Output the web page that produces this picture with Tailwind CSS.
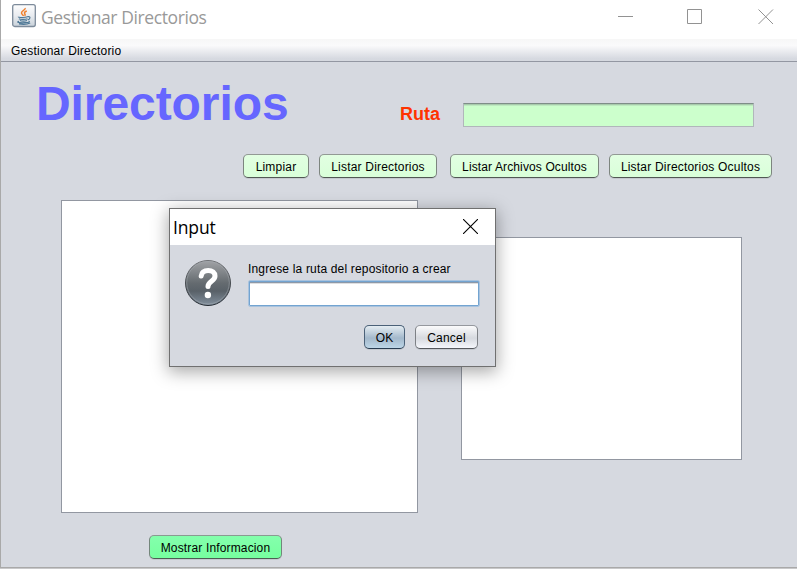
<!DOCTYPE html>
<html lang="es">
<head>
<meta charset="utf-8">
<title>Gestionar Directorios</title>
<script src="https://cdn.jsdelivr.net/npm/@tailwindcss/browser@4"></script>
</head>
<body class="w-[797px] h-[569px] overflow-hidden bg-[#c8c8ca] font-['Liberation_Sans',Arial,sans-serif] text-[12px] text-black">
<main class="relative flex flex-col w-[797px] h-[568px] border-l border-b border-[#a9a9a9] bg-[#d6d9e0]">
  <header class="flex h-[39px] shrink-0 bg-white pl-[11px]">
    <svg class="mt-[4px] shrink-0" width="25" height="24" viewBox="0 0 25 24" fill="none">
      <defs><linearGradient id="tile" x1="0" y1="0" x2="0" y2="1"><stop offset="0" stop-color="#fdfdfe"/><stop offset=".5" stop-color="#e9ecf0"/><stop offset="1" stop-color="#c9d2da"/></linearGradient></defs>
      <rect x=".7" y=".7" width="22.6" height="21.8" rx="2" fill="url(#tile)" stroke="#7d8b9b" stroke-width="1.3"/>
      <path d="M13.200 4c.5 2-4 2.700-3.700 5 .1 1.200 1.700 1.800 1.800 3M14.800 7c-1.700.6-2.900 1.500-2.100 2.700.5.700.9 1.200 0 2.200" stroke="#ee8130" stroke-width="1.500"/>
      <path d="M6.500 12.700c-1 .9 6.500 1.200 9 .1M7 14.700c1 .9 6.500.9 8.500.1M8 16.500c1.400.7 5 .7 7 0M15.500 12.700c3.200-.9 3.200 2.200.4 3.200M7 17.300c-4.200 1.200 3 2 9 1 1.200-.3 1.700-.7 1-1.100M7 19.900c3 .5 8.600.3 11.200-.9" stroke="#4e7896" stroke-width="1.200"/>
    </svg>
    <h2 class="ml-[4px] mt-[5px] w-[200px] whitespace-nowrap font-['Open_Sans','Noto_Sans',sans-serif] text-[17.500px] leading-[25px] tracking-[-0.400px] text-[#999]">Gestionar Directorios</h2>
    <svg class="ml-auto mr-[23px] mt-[9px]" width="156" height="16" viewBox="0 0 156 16" fill="none" stroke="#929292">
      <path d="M0 7.500h15M69.500.5h14v14h-14z"/>
      <path d="M140.500.5l14.500 14.500M155 .5l-14.500 14.500"/>
    </svg>
  </header>
  <nav class="flex h-[23px] shrink-0 border-b border-[#9397a2] bg-linear-to-b from-[#f7f7f7] via-[#fafafb] via-30% to-[#d6d9e0] to-90% pl-[10px] pt-[1px] leading-[23px] tracking-[0.180px]">Gestionar Directorio</nav>

  <section class="flex h-[92px] shrink-0">
    <h1 class="w-[364px] shrink-0 pl-[35px] pt-[14px] text-[48px] leading-[55px] font-bold tracking-[-0.080px] text-[#6666ff]">Directorios</h1>
    <label class="w-[63px] shrink-0 pl-[35px] pt-[42px] text-[18px] leading-[20px] font-bold text-[#ff3300]"><span class="block w-[40px]">Ruta</span></label>
    <div class="ml-[35px] mt-[41px] h-[24px] w-[291px] border border-[#b1b6bb] border-t-[#7f8d88] bg-[#ccffcc] shadow-[inset_0_1px_0_#a7cbab,inset_0_2px_0_#bee9c0]"></div>
  </section>

  <section class="flex h-[25px] shrink-0 pl-[242px] tracking-[0.200px]">
    <button class="h-[24px] w-[66px] rounded-[5px] border border-[#7d857f] border-b-[#515854] border-t-[#929994] bg-linear-to-b from-[#e2ffe2] to-[#d9ffd9] pt-[1px] shadow-[0_1px_0_#c4c8ce]">Limpiar</button>
    <button class="ml-[10px] h-[24px] w-[118px] rounded-[5px] border border-[#7d857f] border-b-[#515854] border-t-[#929994] bg-linear-to-b from-[#e2ffe2] to-[#d9ffd9] pt-[1px] shadow-[0_1px_0_#c4c8ce]">Listar Directorios</button>
    <button class="ml-[13px] h-[24px] w-[149px] rounded-[5px] border border-[#7d857f] border-b-[#515854] border-t-[#929994] bg-linear-to-b from-[#e2ffe2] to-[#d9ffd9] pt-[1px] tracking-[0.120px] shadow-[0_1px_0_#c4c8ce]">Listar Archivos Ocultos</button>
    <button class="ml-[10px] h-[24px] w-[163px] rounded-[5px] border border-[#7d857f] border-b-[#515854] border-t-[#929994] bg-linear-to-b from-[#e2ffe2] to-[#d9ffd9] pt-[1px] shadow-[0_1px_0_#c4c8ce]">Listar Directorios Ocultos</button>
  </section>

  <section class="flex pt-[21px] pl-[60px] items-start">
    <div class="h-[313px] w-[357px] border border-[#9297a1] bg-white"></div>
    <div class="mt-[37px] ml-[43px] h-[223px] w-[281px] border border-[#9297a1] bg-white"></div>
  </section>
  <button class="ml-[148px] mt-[22px] h-[24px] w-[133px] shrink-0 rounded-[5px] border border-[#73867b] border-b-[#4c5d53] border-t-[#8a9a91] bg-linear-to-b from-[#84ffac] to-[#76ff9f] pt-[1px] tracking-[0.150px] shadow-[0_1px_0_#c4c8ce]">Mostrar Informacion</button>

  <div role="dialog" class="absolute left-[168px] top-[208px] flex h-[159px] w-[327px] flex-col border border-[#707070] bg-[#d6d9e0] shadow-[0_4px_16px_1px_rgba(0,0,0,0.340)]">
    <div class="flex h-[36px] shrink-0 justify-between bg-white pl-[3px] pr-[17px]">
      <span class="pt-[6px] font-['Open_Sans','Noto_Sans',sans-serif] text-[17.500px] leading-[25px] tracking-[-0.150px]">Input</span>
      <svg class="mt-[10px]" width="15" height="15" viewBox="0 0 15 15" stroke="#000" stroke-width="1.100"><path d="M0 0l15 15M15 0L0 15"/></svg>
    </div>
    <div class="flex">
      <svg class="ml-[15px] mt-[15px] shrink-0" width="46" height="46" viewBox="0 0 46 46" fill="none">
        <defs><linearGradient id="ball" x1="0" y1="0" x2="0" y2="1"><stop offset="0" stop-color="#a1a3a6"/><stop offset=".5" stop-color="#656b70"/><stop offset=".68" stop-color="#596168"/><stop offset="1" stop-color="#82909e"/></linearGradient>
        <linearGradient id="rim" x1="0" y1="0" x2="0" y2="1"><stop offset="0" stop-color="#6d6f72"/><stop offset="1" stop-color="#20272e"/></linearGradient></defs>
        <circle cx="23" cy="23" r="22.500" fill="url(#ball)" stroke="url(#rim)"/>
        <circle cx="23" cy="22.700" r="21.300" stroke="#a6adb3" stroke-opacity=".6" stroke-width=".8"/>
        <path d="M16.200 16c.5-3.700 3.200-5.500 7-5.500 4.100 0 6.800 2.100 6.800 5.500 0 5.200-7 5.300-7 10.500" stroke="#fff" stroke-width="5" stroke-linecap="round" stroke-linejoin="round"/>
        <circle cx="22.900" cy="35" r="3.200" fill="#fff"/>
      </svg>
      <div class="ml-[17px] mt-[16px]">
        <p class="h-[18px] whitespace-nowrap leading-[16px] tracking-[0.170px]">Ingrese la ruta del repositorio a crear</p>
        <div class="mt-px h-[27px] w-[232px] rounded-[2px] border border-[#a9c3de] bg-white shadow-[inset_0_0_0_1px_#73a4d1,inset_0_2px_0_#8c98a8,inset_0_3px_0_#dedfe1]"></div>
      </div>
    </div>
    <div class="flex pt-[18px] pl-[194px]">
      <button class="h-[24px] w-[41px] rounded-[5px] border border-[#4b6178] border-b-[#273b50] bg-linear-to-b from-[#e5edf2] via-[#a3b8cb] via-55% to-[#bdd6e7] pt-[2px] shadow-[0_1px_0_#c4c8ce]">OK</button>
      <button class="ml-[10px] h-[24px] w-[63px] rounded-[5px] border border-[#7e8186] border-b-[#55585d] border-t-[#95989e] bg-linear-to-b from-[#fbfbfc] via-[#d6d9df] via-55% to-[#f5f7fc] pt-[2px] tracking-[0.200px] shadow-[0_1px_0_#c4c8ce]">Cancel</button>
    </div>
  </div>
</main>
</body>
</html>
